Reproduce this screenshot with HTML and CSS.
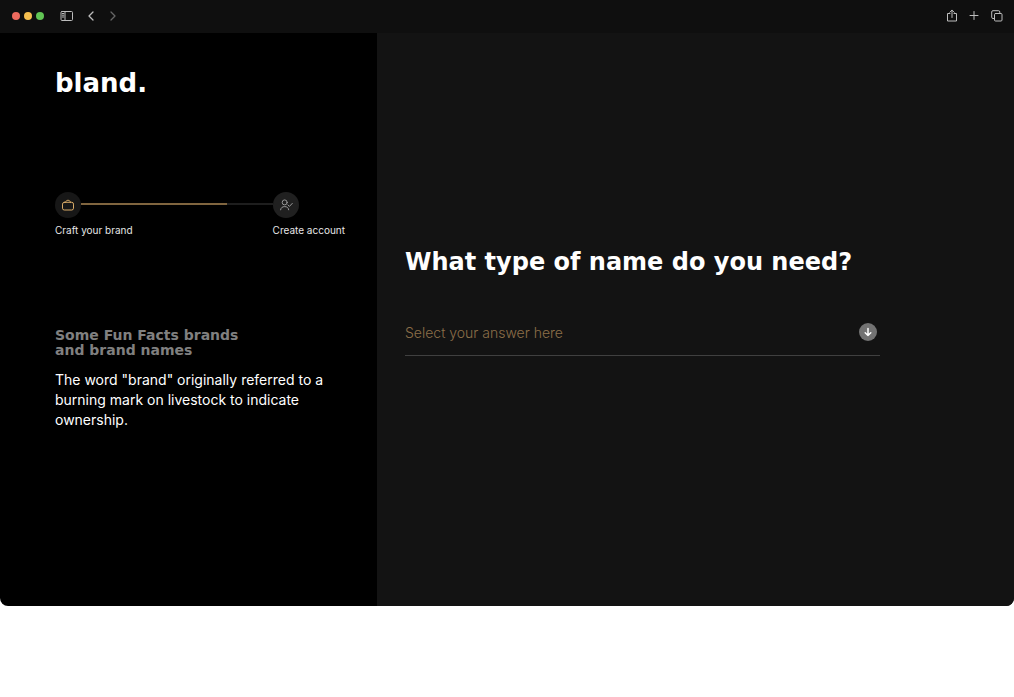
FILE: index.html
```html
<!DOCTYPE html>
<html lang="en">
<head>
<meta charset="utf-8">
<meta name="viewport" content="width=device-width, initial-scale=1">
<title>bland.</title>
<link rel="stylesheet" href="styles.css">
</head>
<body>
<div class="window">
  <header class="toolbar">
    <div class="lights">
      <span class="light light-close"></span>
      <span class="light light-min"></span>
      <span class="light light-max"></span>
    </div>
    <button class="tool" aria-label="Sidebar">
      <svg width="14" height="12" viewBox="0 0 14 12"><rect x="1" y="1.5" width="11.5" height="9" rx="1"/><path d="M5 1.5v9M2.3 3.5h1.5M2.3 5.2h1.5M2.3 7h1.5"/></svg>
    </button>
    <button class="tool" aria-label="Back">
      <svg width="10" height="12" viewBox="0 0 10 12"><path class="strong" d="M7 2 3 6l4 4"/></svg>
    </button>
    <button class="tool tool-dim" aria-label="Forward">
      <svg width="10" height="12" viewBox="0 0 10 12"><path class="strong" d="m3 2 4 4-4 4"/></svg>
    </button>
    <div class="tools-end">
      <button class="tool" aria-label="Share">
        <svg width="12" height="14" viewBox="0 0 12 14"><path d="M4 4.5H1.5v7.500h9V4.500H8M6 8.500V1.300M3.800 3.300 6 1.100l2.200 2.200"/></svg>
      </button>
      <button class="tool" aria-label="New tab">
        <svg width="12" height="14" viewBox="0 0 12 14"><path d="M6 2.500v8M2 6.500h8"/></svg>
      </button>
      <button class="tool" aria-label="Tabs">
        <svg width="14" height="14" viewBox="0 0 14 14"><rect x="4.500" y="4.500" width="7.500" height="7.500" rx="1"/><path d="M4.500 9.500H3a1.300 1.300 0 0 1-1.300-1.300V3A1.300 1.300 0 0 1 3 1.700h5.500A1.300 1.300 0 0 1 9.800 3v1.500"/></svg>
      </button>
    </div>
  </header>
  <div class="content">
    <aside class="side">
      <div class="logo">bland.</div>
      <ol class="steps">
        <li class="step step-active">
          <span class="step-icon">
            <svg width="14" height="14" viewBox="0 0 14 14"><rect x="1.500" y="4.300" width="11" height="7.700" rx="1.800"/><path d="M4.500 4.300c.3-1.400 1.200-2 2.500-2s2.200.6 2.500 2"/></svg>
          </span>
          <span class="track"></span>
          <span class="step-label">Craft your brand</span>
        </li>
        <li class="step">
          <span class="step-icon">
            <svg width="14" height="14" viewBox="0 0 14 14"><circle cx="5.700" cy="4.400" r="2.500"/><path d="M1.600 11.800c.2-2 1.700-3.200 4.100-3.200s3.800 1.200 4 3.200M8.900 6.900l1.500 1.500 2.900-3"/></svg>
          </span>
          <span class="step-label">Create account</span>
        </li>
      </ol>
      <section class="facts">
        <h2 class="facts-title">Some Fun Facts brands<br>and brand names</h2>
        <p class="facts-text">The word "brand" originally referred to a burning mark on livestock to indicate ownership.</p>
      </section>
    </aside>
    <main class="main">
      <form class="question">
        <label class="question-title" for="answer">What type of name do you need?</label>
        <div class="field">
          <select class="answer" id="answer">
            <option>Select your answer here</option>
            <option>Company name</option>
            <option>Product name</option>
          </select>
          <svg class="arrow" width="18" height="18" viewBox="0 0 18 18"><circle cx="9" cy="9" r="9"/><path d="M9 5.500v7M6.200 9.700 9 12.500l2.800-2.800"/></svg>
        </div>
      </form>
    </main>
  </div>
</div>
</body>
</html>
```
FILE: styles.css
```css
* { box-sizing: border-box; }
body {
  margin: 0;
  background: #fff;
  font-family: Inter, "Liberation Sans", sans-serif;
  color: #fff;
}
.window {
  display: flex;
  flex-direction: column;
  background: #000;
  border-radius: 0 0 8px 8px;
  overflow: hidden;
}
.toolbar {
  display: flex;
  align-items: center;
  height: 33px;
  padding: 0 10px 2px 12px;
  background: #0f0f0f;
}
.lights { display: flex; gap: 4px; margin-right: 16px; }
.light { width: 8px; height: 8px; border-radius: 50%; }
.light-close { background: #ed6a5e; }
.light-min { background: #f5bf4f; }
.light-max { background: #61c554; }
.tool {
  display: flex;
  padding: 0;
  border: 0;
  background: none;
  color: #bdbdbd;
}
.tool + .tool { margin-left: 12px; }
.tool-dim { color: #666; }
.tool svg, .step-icon svg {
  fill: none;
  stroke: currentColor;
  stroke-width: 1;
  stroke-linecap: round;
  stroke-linejoin: round;
}
.tool .strong { stroke-width: 1.3; }
.tools-end { display: flex; margin-left: auto; }
.tools-end .tool + .tool { margin-left: 10px; }
.content {
  display: grid;
  grid-template-columns: 377fr 637fr;
  min-height: 573px;
}
.side { padding: 32px 32px 32px 55px; }
.logo {
  font: 700 26px/36px "DejaVu Sans", sans-serif;
}
.steps {
  display: flex;
  margin: 91px 0 0;
  padding: 0;
  list-style: none;
}
.step {
  display: grid;
  grid-template-columns: 26px auto;
  align-items: center;
  row-gap: 5px;
}
.step-active { flex: 1; grid-template-columns: 26px 1fr; }
.step-icon {
  display: flex;
  align-items: center;
  justify-content: center;
  width: 26px;
  height: 26px;
  border-radius: 50%;
  background: #202020;
  color: #999;
}
.step-active .step-icon { background: #171717; color: #d9ab68; }
.track {
  height: 2px;
  margin-bottom: 2px;
  background: linear-gradient(90deg, #80653f 76%, #1e1e1e 76%);
}
.step-label {
  grid-column: 1 / -1;
  font-size: 10px;
  line-height: 14px;
  color: #e6e6e6;
  white-space: nowrap;
}
.facts { margin-top: 91px; }
.facts-title {
  margin: 0;
  font: 700 14px/15px "DejaVu Sans", sans-serif;
  color: #808080;
}
.facts-text {
  margin: 12px 0 0;
  max-width: 270px;
  font-size: 14px;
  line-height: 20px;
}
.main {
  display: flex;
  align-items: center;
  padding: 0 134px 37px 28px;
  background: #131313;
}
.question { flex: 1; }
.question-title {
  display: block;
  font: 700 24px/32px "DejaVu Sans", sans-serif;
  white-space: nowrap;
}
.field {
  position: relative;
  margin-top: 32px;
  border-bottom: 1px solid #404040;
}
.answer {
  display: block;
  width: 100%;
  height: 45px;
  padding: 0 32px 0 0;
  border: 0;
  background: none;
  appearance: none;
  font: 300 14px/20px Inter, sans-serif;
  color: #8c6f49;
}
.answer option { color: #131313; }
.arrow {
  position: absolute;
  top: 13px;
  right: 3px;
  fill: #737373;
  pointer-events: none;
}
.arrow path {
  fill: none;
  stroke: #fff;
  stroke-width: 1.5;
  stroke-linecap: round;
  stroke-linejoin: round;
}
```
